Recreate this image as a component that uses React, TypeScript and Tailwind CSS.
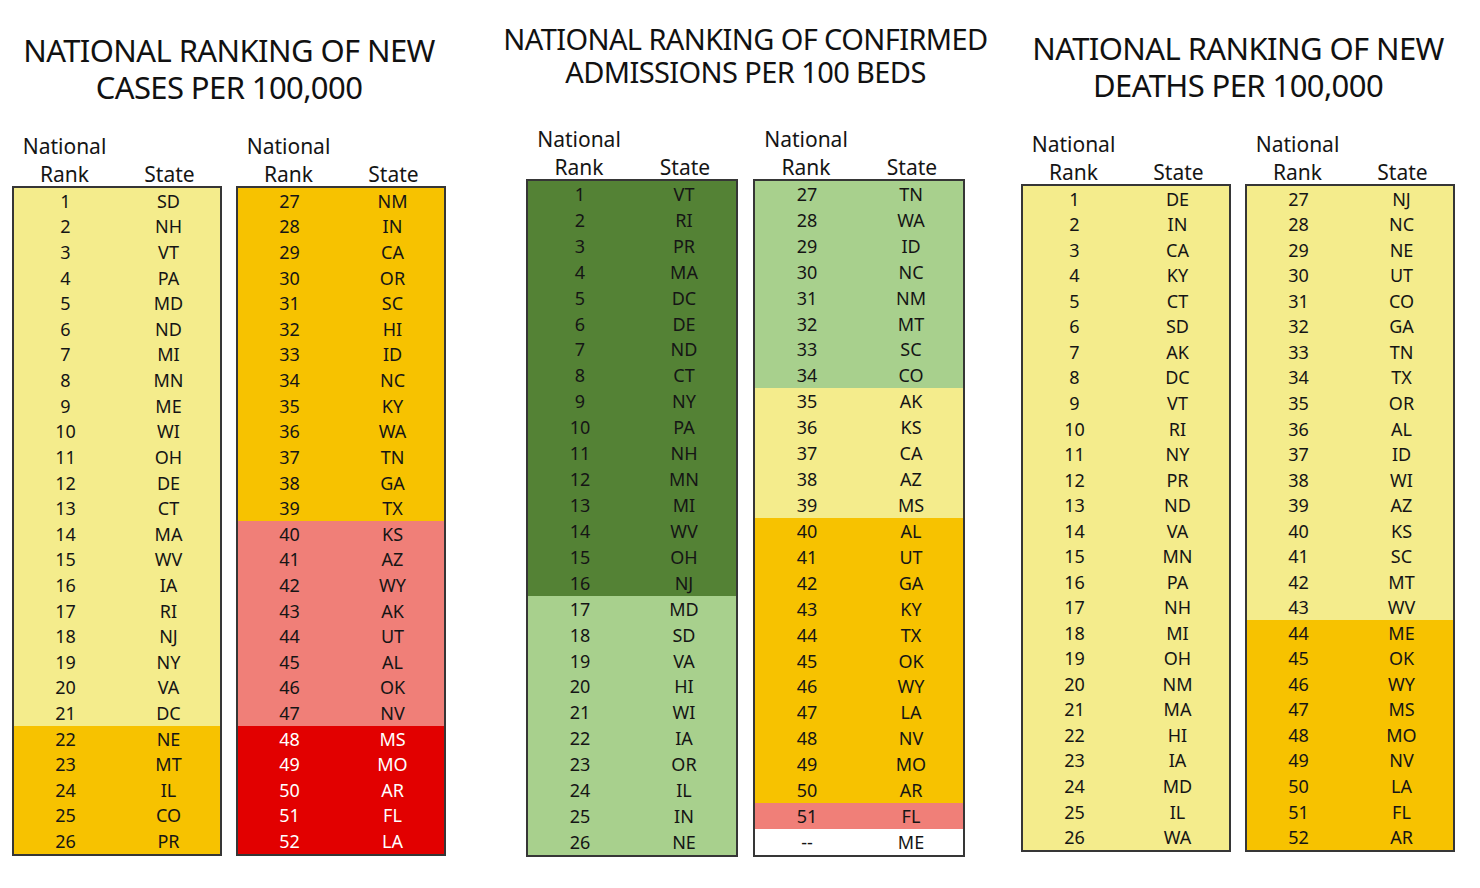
const YEL = 'bg-[#f4ec8c]';
const ORG = 'bg-[#f7c200]';
const SAL = 'bg-[#f07f78]';
const RED = 'bg-[#e20000] text-white';
const DKG = 'bg-[#548235]';
const LTG = 'bg-[#a8d08d]';
const WHT = 'bg-white';

type Row = { rank: string; state: string; cls: string };

// build rows from a space separated list of states, colour picked by rank
const rows = (start: number, states: string, pick: (rank: number) => string): Row[] =>
  states.split(' ').map((s, i) => ({ rank: String(start + i), state: s, cls: pick(start + i) }));

const casesA = rows(1, 'SD NH VT PA MD ND MI MN ME WI OH DE CT MA WV IA RI NJ NY VA DC NE MT IL CO PR', (r) =>
  r <= 21 ? YEL : ORG
);
const casesB = rows(27, 'NM IN CA OR SC HI ID NC KY WA TN GA TX KS AZ WY AK UT AL OK NV MS MO AR FL LA', (r) =>
  r <= 39 ? ORG : r <= 47 ? SAL : RED
);

const admitA = rows(1, 'VT RI PR MA DC DE ND CT NY PA NH MN MI WV OH NJ MD SD VA HI WI IA OR IL IN NE', (r) =>
  r <= 16 ? DKG : LTG
);
const admitB: Row[] = [
  ...rows(27, 'TN WA ID NC NM MT SC CO AK KS CA AZ MS AL UT GA KY TX OK WY LA NV MO AR FL', (r) =>
    r <= 34 ? LTG : r <= 39 ? YEL : r <= 50 ? ORG : SAL
  ),
  { rank: '--', state: 'ME', cls: WHT },
];

const deathsA = rows(1, 'DE IN CA KY CT SD AK DC VT RI NY PR ND VA MN PA NH MI OH NM MA HI IA MD IL WA', () => YEL);
const deathsB = rows(27, 'NJ NC NE UT CO GA TN TX OR AL ID WI AZ KS SC MT WV ME OK WY MS MO NV LA FL AR', (r) =>
  r <= 43 ? YEL : ORG
);

function Table({ data, w, h }: { data: Row[]; w: string; h: string }) {
  return (
    <div className={`${w} ${h} flex flex-col border-2 border-[#363636]`}>
      {data.map((r) => (
        <div key={r.rank + r.state} className={`flex-1 flex items-center text-[18px] leading-none text-[#151515] ${r.cls}`}>
          <span className="w-1/2 text-center">{r.rank}</span>
          <span className="w-1/2 text-center">{r.state}</span>
        </div>
      ))}
    </div>
  );
}

function Header({ w }: { w: string }) {
  return (
    <div className={`${w} flex items-end text-[21px] leading-[24px] text-[#151515]`}>
      <div className="w-1/2 flex flex-col items-center gap-[4px]">
        <span>National</span>
        <span>Rank</span>
      </div>
      <div className="w-1/2 text-center">State</div>
    </div>
  );
}

function Panel({
  title,
  titleCls,
  pad,
  gapTitle,
  a,
  b,
  pw,
  w,
  h,
  gap,
}: {
  title: string[];
  titleCls: string;
  pad: string;
  gapTitle: string;
  a: Row[];
  b: Row[];
  pw: string;
  w: string;
  h: string;
  gap: string;
}) {
  return (
    <div className={`flex flex-col shrink-0 ${pw} ${pad}`}>
      <div className={`flex flex-col items-center whitespace-nowrap text-[#111] ${titleCls}`}>
        {title.map((t) => (
          <div key={t}>{t}</div>
        ))}
      </div>
      <div className={`flex ${gap} ${gapTitle}`}>
        <Header w={w} />
        <Header w={w} />
      </div>
      <div className={`flex ${gap}`}>
        <Table data={a} w={w} h={h} />
        <Table data={b} w={w} h={h} />
      </div>
    </div>
  );
}

export default function App() {
  return (
    <div
      className="w-[1480px] h-[888px] bg-white flex pl-[12px]"
      style={{ fontFamily: '"Noto Sans", "Open Sans", sans-serif' }}
    >
      <Panel
        title={['NATIONAL RANKING OF NEW', 'CASES PER 100,000']}
        titleCls="text-[31px] leading-[37px] tracking-[-0.6px]"
        pad="pt-[32px]"
        gapTitle="mt-[28px]"
        a={casesA}
        b={casesB}
        pw="w-[434px]"
        w="w-[210px]"
        h="h-[670px]"
        gap="gap-[14px]"
      />
      <div className="ml-[80px]">
        <Panel
          title={['NATIONAL RANKING OF CONFIRMED', 'ADMISSIONS PER 100 BEDS']}
          titleCls="text-[29px] leading-[33px] tracking-[-0.6px]"
          pad="pt-[22px]"
          gapTitle="mt-[39px]"
          a={admitA}
          b={admitB}
          pw="w-[439px]"
          w="w-[212px]"
          h="h-[678px]"
          gap="gap-[15px]"
        />
      </div>
      <div className="ml-[56px]">
        <Panel
          title={['NATIONAL RANKING OF NEW', 'DEATHS PER 100,000']}
          titleCls="text-[31px] leading-[37px] tracking-[-0.6px]"
          pad="pt-[30px]"
          gapTitle="mt-[28px]"
          a={deathsA}
          b={deathsB}
          pw="w-[434px]"
          w="w-[210px]"
          h="h-[668px]"
          gap="gap-[14px]"
        />
      </div>
    </div>
  );
}
